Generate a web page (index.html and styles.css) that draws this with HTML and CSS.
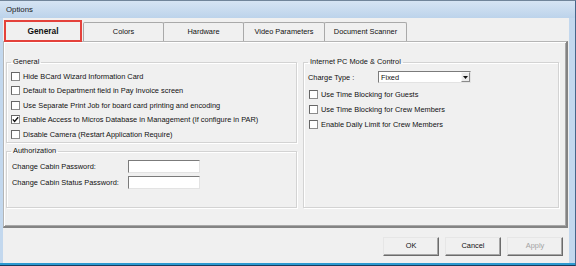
FILE: index.html
```html
<!DOCTYPE html>
<html lang="en">

<head>
    <meta charset="UTF-8">
    <title>Options</title>
    <link rel="stylesheet" href="styles.css">
</head>

<body>
    <div class="window">
        <div class="titlebar">Options</div>
        <div class="frame">
            <div class="client">
                <div class="tabs">
                    <div class="tab active">General</div>
                    <div class="tab w81">Colors</div>
                    <div class="tab w81">Hardware</div>
                    <div class="tab w82">Video Parameters</div>
                    <div class="tab w83">Document Scanner</div>
                </div>
                <div class="panel">
                    <div class="col-left">
                        <fieldset class="group general">
                            <legend>General</legend>
                            <div class="check"><span class="cb"></span>Hide BCard Wizard Information Card</div>
                            <div class="check"><span class="cb"></span>Default to Department field in Pay Invoice screen</div>
                            <div class="check"><span class="cb"></span>Use Separate Print Job for board card printing and encoding</div>
                            <div class="check"><span class="cb"><svg width="7" height="7" viewBox="0 0 7 7"><polyline points="0.8,3.4 2.6,5.4 6.2,1.2" fill="none" stroke="#111" stroke-width="1.4"/></svg></span>Enable Access to Micros Database in Management (If configure in PAR)</div>
                            <div class="check"><span class="cb"></span>Disable Camera (Restart Application Require)</div>
                        </fieldset>
                        <fieldset class="group auth">
                            <legend>Authorization</legend>
                            <div class="field"><span class="lbl">Change Cabin Password:</span><span class="textbox"></span></div>
                            <div class="field"><span class="lbl">Change Cabin Status Password:</span><span class="textbox"></span></div>
                        </fieldset>
                    </div>
                    <fieldset class="group internet">
                        <legend>Internet PC Mode &amp; Control</legend>
                        <div class="charge">
                            <span class="charge-lbl">Charge Type :</span>
                            <div class="select">
                                <span class="select-val">Fixed</span>
                                <span class="select-btn"><svg width="5" height="3" viewBox="0 0 5 3"><polygon points="0,0 5,0 2.5,3" fill="#111"/></svg></span>
                            </div>
                        </div>
                        <div class="check row15 first"><span class="cb"></span>Use Time Blocking for Guests</div>
                        <div class="check row15"><span class="cb"></span>Use Time Blocking for Crew Members</div>
                        <div class="check row15"><span class="cb"></span>Enable Daily Limit for Crew Members</div>
                    </fieldset>
                </div>
                <div class="buttons">
                    <div class="btn">OK</div>
                    <div class="btn">Cancel</div>
                    <div class="btn disabled">Apply</div>
                </div>
            </div>
        </div>
    </div>
</body>

</html>
```

FILE: styles.css
```css
* {
    box-sizing: border-box;
}

body {
    margin: 0;
    font-family: "Liberation Sans", Arial, sans-serif;
    font-size: 7.4px;
    color: #111;
}

.window {
    width: 576px;
    height: 266px;
    background-color: #c3d8ee;
    border-top: 1px solid #71859a;
    border-right: 1px solid #46668a;
    border-bottom: 1px solid #173b5e;
    display: flex;
    flex-direction: column;
}

.titlebar {
    height: 17px;
    line-height: 17px;
    padding-left: 6px;
    background: linear-gradient(#d6e4f3, #bcd3eb);
    color: #1a1a1a;
    font-size: 7.8px;
}

.frame {
    flex: 1;
    padding: 0 6px 0 3px;
    border-bottom: 2px solid #2c9ad1;
}

.client {
    height: 100%;
    background-color: #f0f0f0;
    padding-top: 2px;
}

.tabs {
    display: flex;
    align-items: flex-end;
    height: 21px;
    padding-left: 1px;
}

.tab {
    height: 19px;
    line-height: 18px;
    text-align: center;
    border: 1px solid #a9a9a9;
    border-bottom: none;
    border-radius: 2px 2px 0 0;
    background-color: #f0f0f0;
    margin-right: -1px;
}

.tab.active {
    position: relative;
    width: 78px;
    height: 22px;
    margin-bottom: -1px;
    margin-right: 1px;
    line-height: 19px;
    border: 2px solid #e4413b;
    border-radius: 0;
    font-weight: bold;
    font-size: 8.4px;
}

.w81 {
    width: 81px;
}

.w82 {
    width: 82px;
}

.w83 {
    width: 83px;
}

.panel {
    display: flex;
    gap: 6px;
    height: 187px;
    margin-right: 1px;
    padding: 15px 7px 18px 2px;
    border-top: 1px solid #b5b5b5;
    border-left: 1px solid #b5b5b5;
    border-right: 2px solid #848484;
    border-bottom: 2px solid #848484;
    box-shadow: inset 1px 1px #fff, inset -1px -1px #a8a8a8;
}

.col-left {
    width: 291px;
    display: flex;
    flex-direction: column;
}

.group {
    margin: 0;
    padding: 0 4px;
    min-width: 0;
    border: 1px solid #d3d3d3;
    box-shadow: inset 1px 1px #fff, 1px 1px #fff;
}

.group legend {
    padding: 0 2px;
    line-height: 10px;
}

.general {
    height: 86px;
    padding-top: 1.75px;
}

.auth {
    flex: 1;
    margin-top: 3px;
    padding-top: 2px;
}

.internet {
    flex: 1;
}

.check {
    display: flex;
    align-items: center;
    height: 14.5px;
    white-space: nowrap;
}

.row15 {
    height: 15px;
    padding-left: 1px;
}

.row15.first {
    margin-top: 2.5px;
}

.cb {
    width: 9px;
    height: 9px;
    margin-right: 3px;
    background-color: #fff;
    border: 1px solid #8c8c8c;
    border-top-color: #666;
    border-left-color: #666;
    display: flex;
    align-items: center;
    justify-content: center;
}

.field {
    display: flex;
    align-items: center;
    height: 16.5px;
}

.lbl {
    width: 117px;
    padding-left: 1px;
    white-space: nowrap;
}

.textbox {
    width: 72px;
    height: 13px;
    background-color: #fff;
    border: 1px solid #e3e3e3;
    border-top-color: #7b7b7b;
    border-left-color: #7b7b7b;
}

.charge {
    display: flex;
    align-items: center;
    height: 14px;
    margin-top: 3px;
}

.charge-lbl {
    width: 70px;
}

.select {
    width: 93px;
    height: 12.5px;
    background-color: #fff;
    border: 1px solid #e3e3e3;
    border-top-color: #7b7b7b;
    border-left-color: #7b7b7b;
    display: flex;
    align-items: center;
    justify-content: space-between;
}

.select-val {
    padding-left: 2px;
}

.select-btn {
    width: 9px;
    height: 10px;
    margin-right: 0.5px;
    background-color: #ececec;
    border: 1px solid #f8f8f8;
    border-right-color: #8a8a8a;
    border-bottom-color: #8a8a8a;
    display: flex;
    align-items: center;
    justify-content: center;
}

.buttons {
    display: flex;
    justify-content: flex-end;
    gap: 6px;
    padding: 9px 6px 0 0;
}

.btn {
    width: 56px;
    height: 19px;
    line-height: 16px;
    text-align: center;
    background-color: #f0f0f0;
    border: 1px solid #e6e6e6;
    border-right-color: #6b6b6b;
    border-bottom-color: #6b6b6b;
    box-shadow: inset -1px -1px #a6a6a6;
}

.btn.disabled {
    color: #a3a3a3;
}
```
